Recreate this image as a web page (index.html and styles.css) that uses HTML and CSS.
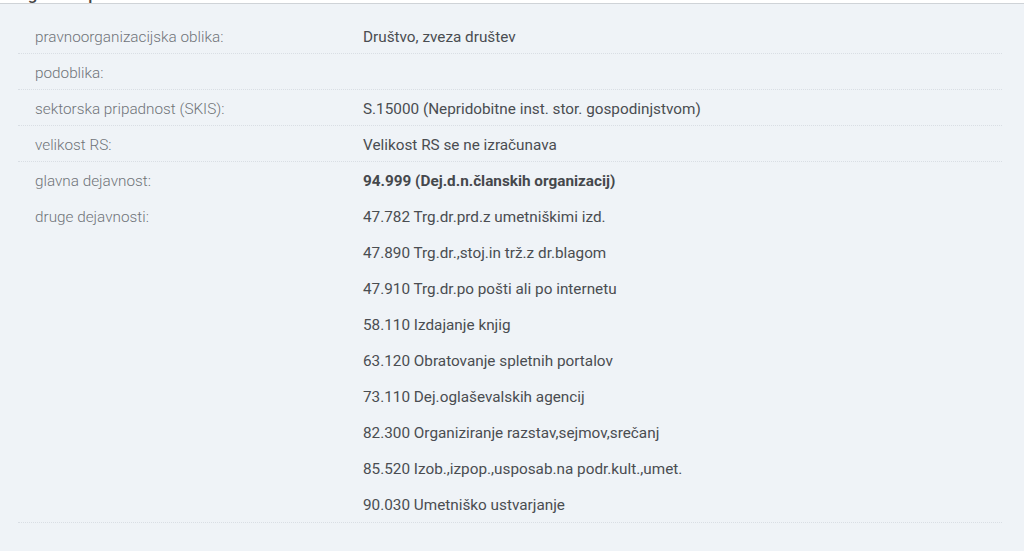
FILE: index.html
```html
<!DOCTYPE html>
<html lang="sl">
<head>
<meta charset="utf-8">
<link rel="stylesheet" href="styles.css">
</head>
<body>
<div class="topbar"><h2 class="heading">Registrski podatki</h2></div>
<section class="panel">
  <div class="table">
    <div class="row">
      <div class="label">pravnoorganizacijska oblika:</div>
      <div class="value">Društvo, zveza društev</div>
    </div>
    <div class="row">
      <div class="label">podoblika:</div>
      <div class="value"></div>
    </div>
    <div class="row">
      <div class="label">sektorska pripadnost (SKIS):</div>
      <div class="value">S.15000 (Nepridobitne inst. stor. gospodinjstvom)</div>
    </div>
    <div class="row">
      <div class="label">velikost RS:</div>
      <div class="value">Velikost RS se ne izračunava</div>
    </div>
    <div class="row row-plain">
      <div class="label">glavna dejavnost:</div>
      <div class="value strong">94.999 (Dej.d.n.članskih organizacij)</div>
    </div>
    <div class="row">
      <div class="label">druge dejavnosti:</div>
      <ul class="list">
        <li>47.782 Trg.dr.prd.z umetniškimi izd.</li>
        <li>47.890 Trg.dr.,stoj.in trž.z dr.blagom</li>
        <li>47.910 Trg.dr.po pošti ali po internetu</li>
        <li>58.110 Izdajanje knjig</li>
        <li>63.120 Obratovanje spletnih portalov</li>
        <li>73.110 Dej.oglaševalskih agencij</li>
        <li>82.300 Organiziranje razstav,sejmov,srečanj</li>
        <li>85.520 Izob.,izpop.,usposab.na podr.kult.,umet.</li>
        <li>90.030 Umetniško ustvarjanje</li>
      </ul>
    </div>
  </div>
</section>
</body>
</html>
```

FILE: styles.css
```css
* { box-sizing: border-box; }
html, body {
  margin: 0;
  padding: 0;
  background: #eff3f7;
  font-family: Roboto, "Liberation Sans", sans-serif;
}
.topbar {
  height: 4px;
  background: #ffffff;
  border-bottom: 1px solid #cfd3d7;
  overflow: hidden;
}
.heading {
  margin: -14px 0 0 0;
  font-size: 17px;
  font-weight: 500;
  color: #444;
  line-height: 17px;
  padding-left: 8px;
  white-space: nowrap;
}
.panel {
  padding: 14px 22px 0 18px;
}
.table {
  display: flex;
  flex-direction: column;
}
.row {
  display: grid;
  grid-template-columns: 328px 1fr;
  border-bottom: 1px dotted #d9dee4;
  padding-left: 17px;
}
.row-plain { border-bottom-color: transparent; }
.label, .value, .list li {
  font-size: 15.3px;
}
.label, .value {
  padding-top: 4px;
  line-height: 31px;
  min-height: 35px;
}
.label {
  color: #6f7479;
  font-weight: 300;
}
.value, .list li {
  color: #4a4d51;
}
.strong { font-weight: 700; color: #45484c; }
.list {
  list-style: none;
  margin: 0;
  padding: 0;
}
.list li {
  padding-top: 3px;
  line-height: 33px;
}
```
